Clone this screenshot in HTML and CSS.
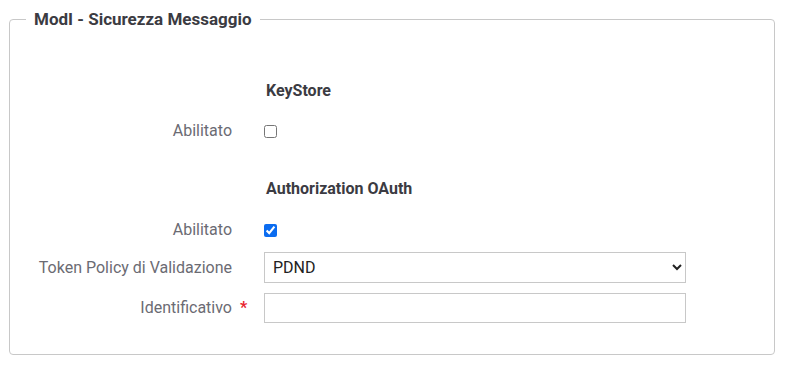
FILE: index.html
```html
<!DOCTYPE html>
<html lang="it">
<head>
<meta charset="utf-8">
<title>ModI - Sicurezza Messaggio</title>
<link rel="stylesheet" href="styles.css">
</head>
<body>
<fieldset class="panel">
  <legend class="panel-title">ModI - Sicurezza Messaggio</legend>
  <div class="form-grid">
    <div class="section-title section-first">KeyStore</div>
    <label class="field-label row-check" for="ks">Abilitato</label>
    <div class="field row-check"><input id="ks" type="checkbox" class="check"></div>

    <div class="section-title section-next">Authorization OAuth</div>
    <label class="field-label row-check2" for="oa">Abilitato</label>
    <div class="field row-check2"><input id="oa" type="checkbox" class="check" checked></div>

    <label class="field-label row-select" for="tp">Token Policy di Validazione</label>
    <div class="field row-select">
      <select id="tp" class="select"><option>PDND</option></select>
    </div>

    <label class="field-label row-input" for="id">Identificativo</label>
    <span class="required row-input">*</span>
    <div class="field row-input"><input id="id" type="text" class="text-input"></div>
  </div>
</fieldset>
</body>
</html>
```
FILE: styles.css
```css
* { box-sizing: border-box; }
html, body { background: #fff; }
body {
  margin: 9px 0 0 9px;
  width: 766px;
  font-family: Roboto, "Liberation Sans", sans-serif;
  font-size: 16px;
}
.panel {
  margin: 0;
  border: 1px solid #c8c8c8;
  border-radius: 4px;
  padding: 0 16px 31px 16px;
  min-width: 0;
}
.panel-title {
  padding: 0 8px;
  font-weight: 700;
  font-size: 17px;
  line-height: 20px;
  color: #3b3b42;
}
.form-grid {
  display: grid;
  grid-template-columns: 206px 32px 422px;
  align-items: center;
}
.section-title {
  grid-column: 3;
  padding-left: 2px;
  font-weight: 700;
  font-size: 16px;
  line-height: 20px;
  color: #3b3b42;
}
.section-first { margin-top: 52px; margin-bottom: 15px; }
.section-next { margin-top: 33px; margin-bottom: 16px; }
.field-label {
  grid-column: 1;
  display: flex;
  align-items: center;
  justify-content: flex-end;
  color: #6b6b73;
  font-size: 16px;
  line-height: 20px;
}
.required {
  grid-column: 2;
  display: flex;
  align-items: center;
  color: #e8242f;
  font-size: 16px;
  font-weight: 700;
  padding-left: 8px;
  line-height: 20px;
}
.field { grid-column: 3; display: flex; align-items: center; }
.row-check { height: 30px; }
.row-check2 { height: 30px; margin-bottom: 7px; }
.row-select { height: 31px; margin-bottom: 10px; }
.row-input { height: 30px; }
.check {
  margin: 0;
  width: 13px;
  height: 13px;
  accent-color: #0b6cf0;
}
.select {
  width: 422px;
  height: 31px;
  border: 1px solid #c8c8c8;
  border-radius: 0;
  background: #fff;
  color: #222;
  font-family: Roboto, "Liberation Sans", sans-serif;
  font-size: 16px;
  padding: 0 4px;
  margin: 0;
}
.text-input {
  width: 422px;
  height: 30px;
  border: 1px solid #c8c8c8;
  border-radius: 0;
  margin: 0;
  padding: 0 8px;
  font-family: Roboto, "Liberation Sans", sans-serif;
  font-size: 16px;
}
```
